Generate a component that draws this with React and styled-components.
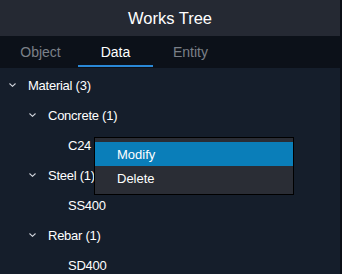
import React from 'react';
import styled, { createGlobalStyle } from 'styled-components';

const Global = createGlobalStyle`
  html, body {
    margin: 0;
    padding: 0;
    background: #151e2b;
  }
  body {
    font-family: 'Liberation Sans', Arial, sans-serif;
  }
`;

const Panel = styled.div`
  width: 340px;
  height: 274px;
  border-right: 2px solid #0b0f17;
  background: #151e2b;
  display: flex;
  flex-direction: column;
  overflow: hidden;
`;

const Header = styled.div`
  height: 36px;
  flex-shrink: 0;
  background: #252933;
  color: #ffffff;
  font-size: 16.5px;
  display: flex;
  align-items: center;
  justify-content: center;
`;

const TabBar = styled.div`
  height: 32px;
  flex-shrink: 0;
  padding-left: 3px;
  background: #0c1119;
  display: flex;
`;

const Tab = styled.div`
  width: 75px;
  display: flex;
  align-items: center;
  justify-content: center;
  font-size: 14px;
  color: ${(p) => (p.$active ? '#ffffff' : '#7b8088')};
  border-bottom: 2px solid ${(p) => (p.$active ? '#2a88d6' : 'transparent')};
  margin-bottom: 1px;
  box-sizing: border-box;
  padding-top: 2px;
`;

const Tree = styled.div`
  position: relative;
  padding-top: 2px;
`;

const Row = styled.div`
  height: 30px;
  display: flex;
  align-items: center;
  padding-left: ${(p) => 9 + p.$depth * 20}px;
  color: #ffffff;
  font-size: 13px;
  letter-spacing: -0.25px;
`;

const Caret = styled.svg`
  width: 7px;
  height: 4px;
  margin-right: 12px;
  flex-shrink: 0;
`;

const Spacer = styled.span`
  display: inline-block;
  width: 19px;
`;

const Menu = styled.div`
  position: absolute;
  left: 94px;
  top: 69px;
  width: 198px;
  padding: 4px 0;
  background: #2a2d35;
  border: 1px solid #000000;
`;

const MenuItem = styled.div`
  height: 24px;
  display: flex;
  align-items: center;
  padding-left: 22px;
  font-size: 13px;
  color: #ffffff;
  background: ${(p) => (p.$hover ? '#0a7eb9' : 'transparent')};
`;

const Chevron = () => (
  <Caret viewBox="0 0 7 4">
    <path d="M0.5 0.5 L3.5 3.3 L6.5 0.5" fill="none" stroke="#d0d4da" strokeWidth="1.1" />
  </Caret>
);

const nodes = [
  { label: 'Material (3)', depth: 0, open: true },
  { label: 'Concrete (1)', depth: 1, open: true },
  { label: 'C24', depth: 2 },
  { label: 'Steel (1)', depth: 1, open: true },
  { label: 'SS400', depth: 2 },
  { label: 'Rebar (1)', depth: 1, open: true },
  { label: 'SD400', depth: 2 },
];

export default function App() {
  return (
    <>
      <Global />
      <Panel>
        <Header>Works Tree</Header>
        <TabBar>
          <Tab>Object</Tab>
          <Tab $active>Data</Tab>
          <Tab>Entity</Tab>
        </TabBar>
        <Tree>
          {nodes.map((n) => (
            <Row key={n.label} $depth={n.depth}>
              {n.open ? <Chevron /> : <Spacer />}
              {n.label}
            </Row>
          ))}
          <Menu>
            <MenuItem $hover>Modify</MenuItem>
            <MenuItem>Delete</MenuItem>
          </Menu>
        </Tree>
      </Panel>
    </>
  );
}
